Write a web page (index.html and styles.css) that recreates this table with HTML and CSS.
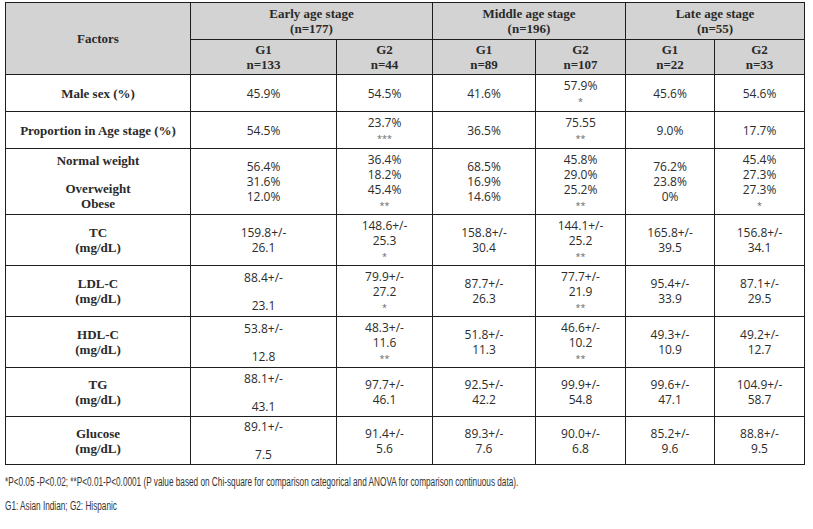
FILE: index.html
```html
<!DOCTYPE html>
<html>
<head>
<meta charset="utf-8">
<link rel="stylesheet" href="styles.css">
</head>
<body>
<div class="page">
<table class="data">
  <colgroup>
    <col class="c-factor"><col class="c-eg1"><col class="c-eg2"><col class="c-mg1"><col class="c-mg2"><col class="c-lg1"><col class="c-lg2">
  </colgroup>
  <thead>
    <tr class="h1">
      <th rowspan="2">Factors</th>
      <th colspan="2">Early age stage<br>(n=177)</th>
      <th colspan="2">Middle age stage<br>(n=196)</th>
      <th colspan="2">Late age stage<br>(n=55)</th>
    </tr>
    <tr class="h2">
      <th>G1<br>n=133</th>
      <th>G2<br>n=44</th>
      <th>G1<br>n=89</th>
      <th>G2<br>n=107</th>
      <th>G1<br>n=22</th>
      <th>G2<br>n=33</th>
    </tr>
  </thead>
  <tbody>
    <tr class="r-short">
      <th>Male sex (%)</th>
      <td>45.9%</td>
      <td>54.5%</td>
      <td>41.6%</td>
      <td>57.9%<br><span class="star">*</span></td>
      <td>45.6%</td>
      <td>54.6%</td>
    </tr>
    <tr class="r-short">
      <th>Proportion in Age stage (%)</th>
      <td>54.5%</td>
      <td>23.7%<br><span class="star">***</span></td>
      <td>36.5%</td>
      <td>75.55<br><span class="star">**</span></td>
      <td>9.0%</td>
      <td>17.7%</td>
    </tr>
    <tr class="r-weight">
      <th><span class="gap">Normal weight</span>Overweight<br>Obese</th>
      <td>56.4%<br>31.6%<br>12.0%</td>
      <td>36.4%<br>18.2%<br>45.4%<br><span class="star">**</span></td>
      <td>68.5%<br>16.9%<br>14.6%</td>
      <td>45.8%<br>29.0%<br>25.2%<br><span class="star">**</span></td>
      <td>76.2%<br>23.8%<br>0%</td>
      <td>45.4%<br>27.3%<br>27.3%<br><span class="star">*</span></td>
    </tr>
    <tr class="r-lab">
      <th>TC<br>(mg/dL)</th>
      <td>159.8+/-<br>26.1</td>
      <td>148.6+/-<br>25.3<br><span class="star">*</span></td>
      <td>158.8+/-<br>30.4</td>
      <td>144.1+/-<br>25.2<br><span class="star">**</span></td>
      <td>165.8+/-<br>39.5</td>
      <td>156.8+/-<br>34.1</td>
    </tr>
    <tr class="r-lab">
      <th>LDL-C<br>(mg/dL)</th>
      <td><span class="gap">88.4+/-</span>23.1</td>
      <td>79.9+/-<br>27.2<br><span class="star">*</span></td>
      <td>87.7+/-<br>26.3</td>
      <td>77.7+/-<br>21.9<br><span class="star">**</span></td>
      <td>95.4+/-<br>33.9</td>
      <td>87.1+/-<br>29.5</td>
    </tr>
    <tr class="r-lab">
      <th>HDL-C<br>(mg/dL)</th>
      <td><span class="gap">53.8+/-</span>12.8</td>
      <td>48.3+/-<br>11.6<br><span class="star">**</span></td>
      <td>51.8+/-<br>11.3</td>
      <td>46.6+/-<br>10.2<br><span class="star">**</span></td>
      <td>49.3+/-<br>10.9</td>
      <td>49.2+/-<br>12.7</td>
    </tr>
    <tr class="r-tg">
      <th>TG<br>(mg/dL)</th>
      <td><span class="gap">88.1+/-</span>43.1</td>
      <td>97.7+/-<br>46.1</td>
      <td>92.5+/-<br>42.2</td>
      <td>99.9+/-<br>54.8</td>
      <td>99.6+/-<br>47.1</td>
      <td>104.9+/-<br>58.7</td>
    </tr>
    <tr class="r-glu">
      <th>Glucose<br>(mg/dL)</th>
      <td><span class="gap">89.1+/-</span>7.5</td>
      <td>91.4+/-<br>5.6</td>
      <td>89.3+/-<br>7.6</td>
      <td>90.0+/-<br>6.8</td>
      <td>85.2+/-<br>9.6</td>
      <td>88.8+/-<br>9.5</td>
    </tr>
  </tbody>
</table>
<div class="notes">
  <p class="note">*P&lt;0.05 -P&lt;0.02; **P&lt;0.01-P&lt;0.0001 (P value based on Chi-square for comparison categorical and ANOVA for comparison continuous data).</p>
  <p class="note">G1: Asian Indian; G2: Hispanic</p>
</div>
</div>
</body>
</html>
```
FILE: styles.css
```css
html, body {
  margin: 0;
  padding: 0;
  background: #ffffff;
}

.page {
  padding: 2px 0 0 0;
}

.data {
  margin-left: 5px;
  width: 800px;
  table-layout: fixed;
  border-collapse: collapse;
  color: #222222;
}

.c-factor { width: 185px; }
.c-eg1 { width: 146px; }
.c-eg2 { width: 96px; }
.c-mg1 { width: 103px; }
.c-mg2 { width: 90px; }
.c-lg1 { width: 89px; }
.c-lg2 { width: 90px; }

.data th,
.data td {
  border: 1px solid #1e1e1e;
  padding: 0 2px;
  text-align: center;
  vertical-align: middle;
}

.data th {
  font-family: "Liberation Serif", "DejaVu Serif", serif;
  font-weight: bold;
  font-size: 13px;
  line-height: 15px;
  color: #2a2a2a;
}

.data thead th {
  background: #d3d3d3;
}

.data td {
  font-family: "Open Sans", "DejaVu Sans", sans-serif;
  font-size: 12px;
  line-height: 15px;
  color: #2c2c2c;
}

.star {
  font-size: 9px;
  line-height: 11px;
  color: #666666;
}

.gap {
  display: block;
  margin-bottom: 13px;
}

.h1 { height: 37px; }
.h2 { height: 35px; }
.r-short { height: 37px; }
.r-weight { height: 66px; }
.r-lab { height: 51px; }
.r-tg { height: 49px; }
.r-glu { height: 48px; }

.notes {
  padding: 9px 0 0 5px;
}

.note {
  margin: 0 0 8px 0;
  font-family: "Liberation Sans", Arial, sans-serif;
  font-size: 12px;
  line-height: 16px;
  color: #333333;
  white-space: nowrap;
  transform: scaleX(0.685);
  transform-origin: left center;
}
```
